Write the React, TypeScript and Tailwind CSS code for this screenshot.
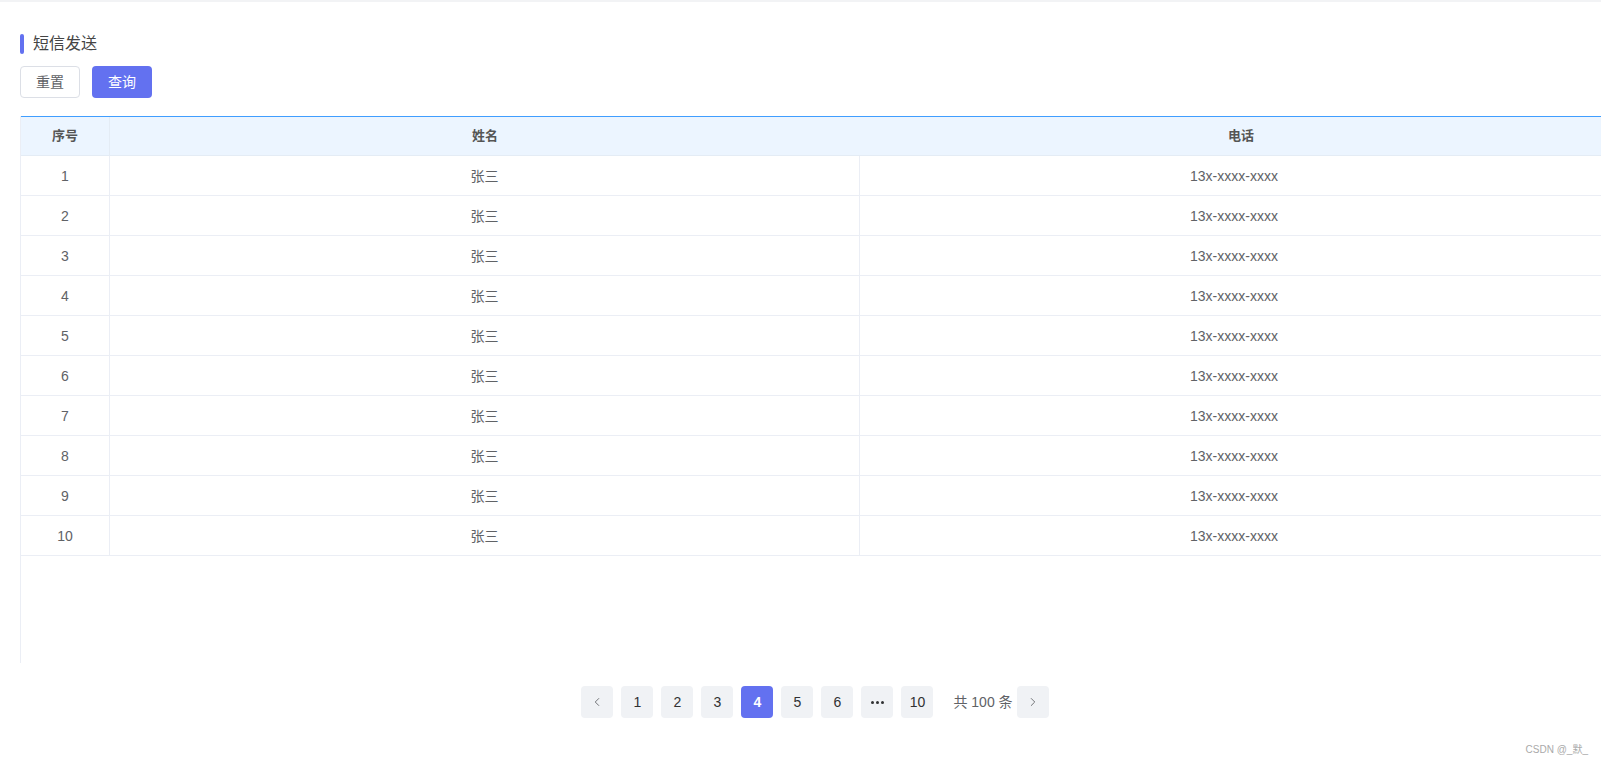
import { ChevronLeft, ChevronRight } from 'lucide-react';

export default function App() {
  const rows = Array.from({ length: 10 }, (_, i) => ({ id: i + 1, name: '张三', phone: '13x-xxxx-xxxx' }));
  const pages = ['1', '2', '3', '4', '5', '6', 'more', '10'];

  return (
    <div
      className="relative w-full h-[767px] overflow-hidden bg-white text-[#606266]"
      style={{ fontFamily: '"Liberation Sans", "Noto Sans CJK SC", sans-serif' }}
    >
      <div className="h-[2px] bg-[#f2f3f5]" />
      <div className="pl-5 pt-8">
        <div className="flex items-center h-5">
          <span className="w-[4px] h-5 rounded-sm bg-[#6371f0]" />
          <span className="ml-[9px] text-base text-[#444]">短信发送</span>
        </div>
        <div className="flex gap-3 mt-3">
          <button className="w-[60px] h-8 rounded border border-[#dcdfe6] bg-white text-sm text-[#606266]">
            重置
          </button>
          <button className="w-[60px] h-8 rounded bg-[#6371f0] text-sm text-white">查询</button>
        </div>

        <div className="mt-[18px] w-[1601px] h-[547px] border-l border-[#ebeef5]">
          <div className="grid grid-cols-[89px_750px_762px] h-10 bg-[#ecf5ff] border-t border-[#409eff] border-b border-b-[#e4ecf5] text-[13px] font-bold text-[#555]">
            <div className="flex items-center justify-center border-r border-[#e4ecf5]">序号</div>
            <div className="flex items-center justify-center">姓名</div>
            <div className="flex items-center justify-center">电话</div>
          </div>
          {rows.map((r) => (
            <div key={r.id} className="grid grid-cols-[89px_750px_762px] h-10 border-b border-[#ebeef5] text-sm">
              <div className="flex items-center justify-center border-r border-[#ebeef5]">{r.id}</div>
              <div className="flex items-center justify-center border-r border-[#ebeef5]">{r.name}</div>
              <div className="flex items-center justify-center pr-[14px]">{r.phone}</div>
            </div>
          ))}
        </div>

        <div className="flex justify-center items-center mt-[23px] pl-[9px] gap-2 text-sm">
          <button className="w-8 h-8 rounded-sm bg-[#f0f2f5] flex items-center justify-center text-[#606266]">
            <ChevronLeft size={14} strokeWidth={1.5} />
          </button>
          {pages.map((p) => (
            <button
              key={p}
              className={
                p === '4'
                  ? 'w-8 h-8 rounded-sm bg-[#6371f0] text-white font-bold flex items-center justify-center'
                  : 'w-8 h-8 rounded-sm bg-[#f0f2f5] text-[#303133] flex items-center justify-center'
              }
            >
              {p === 'more' ? (
                <span className="flex gap-[2px]">
                  <span className="w-[3px] h-[3px] rounded-full bg-[#303133]" />
                  <span className="w-[3px] h-[3px] rounded-full bg-[#303133]" />
                  <span className="w-[3px] h-[3px] rounded-full bg-[#303133]" />
                </span>
              ) : (
                p
              )}
            </button>
          ))}
          <span className="ml-3 text-sm text-[#606266]">共 100 条</span>
          <button className="w-8 h-8 rounded-sm bg-[#f0f2f5] flex items-center justify-center text-[#606266] -ml-1">
            <ChevronRight size={14} strokeWidth={1.5} />
          </button>
        </div>
      </div>
      <div className="absolute right-[13px] bottom-[10px] text-[10px] text-[#aaa]">CSDN @_默_</div>
    </div>
  );
}
